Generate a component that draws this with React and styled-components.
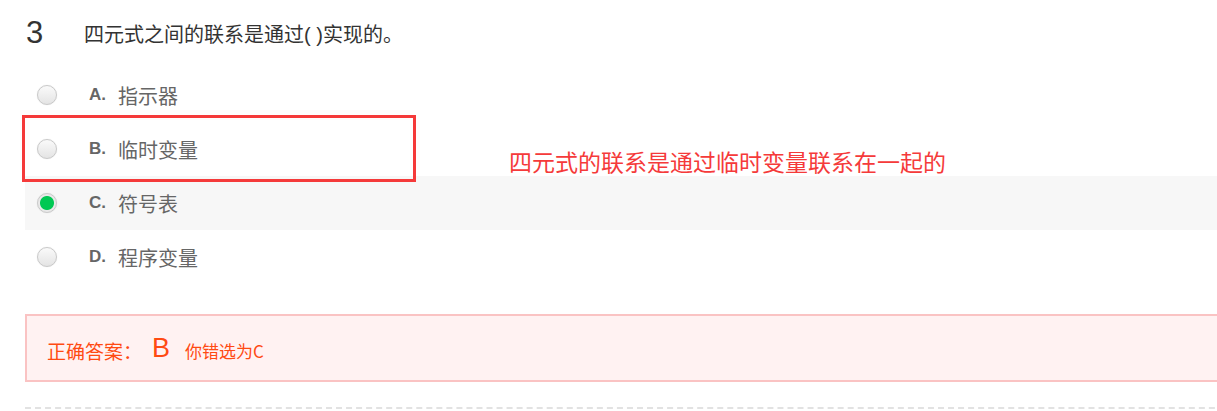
import React from 'react'
import styled, { createGlobalStyle } from 'styled-components'

const GlobalStyle = createGlobalStyle`
  html, body {
    margin: 0;
    padding: 0;
    background: #fff;
    overflow: hidden;
  }
  body {
    font-family: "Liberation Sans", Arial, "Noto Sans CJK SC", sans-serif;
  }
`

const options = [
  { key: 'A', text: '指示器' },
  { key: 'B', text: '临时变量', marked: true },
  { key: 'C', text: '符号表', checked: true },
  { key: 'D', text: '程序变量' },
]

const App = () => {
  return (
    <>
      <GlobalStyle />
      <Question>
        <Header>
          <Num>3</Num>
          <Title>四元式之间的联系是通过( )实现的。</Title>
        </Header>
        <OptionList>
          {options.map((o) => (
            <Option key={o.key} $checked={o.checked}>
              <Radio $checked={o.checked} />
              <Letter>{o.key}.</Letter>
              <OptionText>{o.text}</OptionText>
              {o.marked && (
                <>
                  <MarkBox />
                  <Note>四元式的联系是通过临时变量联系在一起的</Note>
                </>
              )}
            </Option>
          ))}
        </OptionList>
        <Answer>
          <AnswerLabel>正确答案：</AnswerLabel>
          <AnswerKey>B</AnswerKey>
          <Wrong>你错选为C</Wrong>
        </Answer>
        <Divider />
      </Question>
    </>
  )
}

export default App

const Question = styled.div`
  width: 1230px;
  padding-left: 25px;
`

const Header = styled.div`
  display: flex;
  align-items: center;
  height: 68px;
  padding-bottom: 2px;
  box-sizing: border-box;
`

const Num = styled.span`
  font-family: "Liberation Sans", Arial, sans-serif;
  font-size: 31px;
  color: #333;
  width: 58px;
  margin-left: 1px;
`

const Title = styled.span`
  font-family: "Liberation Sans", "Noto Sans CJK SC", sans-serif;
  font-size: 20px;
  color: #333;
`

const OptionList = styled.div`
  display: flex;
  flex-direction: column;
`

const Option = styled.div`
  position: relative;
  display: flex;
  align-items: center;
  height: 54px;
  padding-left: 12px;
  background: ${(p) => (p.$checked ? '#f7f7f7' : 'transparent')};
`

const Radio = styled.span`
  width: 20px;
  height: 20px;
  border-radius: 50%;
  box-sizing: border-box;
  border: 1px solid #c9c9c9;
  background: ${(p) =>
    p.$checked
      ? 'radial-gradient(circle, #00c853 0 6.5px, #e9e9e9 7.5px)'
      : 'linear-gradient(#fafafa, #e4e4e4)'};
  box-shadow: 0 0 1px rgba(0, 0, 0, 0.15);
  margin-right: 32px;
`

const Letter = styled.span`
  font-family: "Liberation Sans", Arial, sans-serif;
  font-weight: bold;
  font-size: 17px;
  color: #666;
  width: 29px;
`

const OptionText = styled.span`
  font-family: "Noto Sans CJK SC", sans-serif;
  font-size: 20px;
  color: #666;
`

const MarkBox = styled.div`
  position: absolute;
  z-index: 2;
  left: -3px;
  top: -7px;
  width: 394px;
  height: 67px;
  box-sizing: border-box;
  border: 3px solid #f53a3a;
  pointer-events: none;
`

const Note = styled.div`
  position: absolute;
  z-index: 2;
  left: 484px;
  top: 23px;
  font-family: "Noto Sans CJK SC", sans-serif;
  font-size: 23px;
  line-height: 32px;
  color: #f53a3a;
  white-space: nowrap;
`

const Answer = styled.div`
  margin-top: 30px;
  height: 68px;
  box-sizing: border-box;
  border: 2px solid #fac3c3;
  background: #fff2f2;
  display: flex;
  align-items: center;
  padding-left: 20px;
  padding-top: 4px;
  color: #ff4a12;
`

const AnswerLabel = styled.span`
  font-family: "Noto Sans CJK SC", sans-serif;
  font-size: 19px;
`

const AnswerKey = styled.span`
  font-family: "Liberation Sans", Arial, sans-serif;
  font-size: 27px;
  margin: 0 15px 0 10px;
  position: relative;
  top: -2px;
`

const Wrong = styled.span`
  font-family: "Noto Sans CJK SC", "Liberation Sans", sans-serif;
  font-size: 17px;
`

const Divider = styled.div`
  margin-top: 25px;
  border-top: 2px dashed #e2e2e2;
`
